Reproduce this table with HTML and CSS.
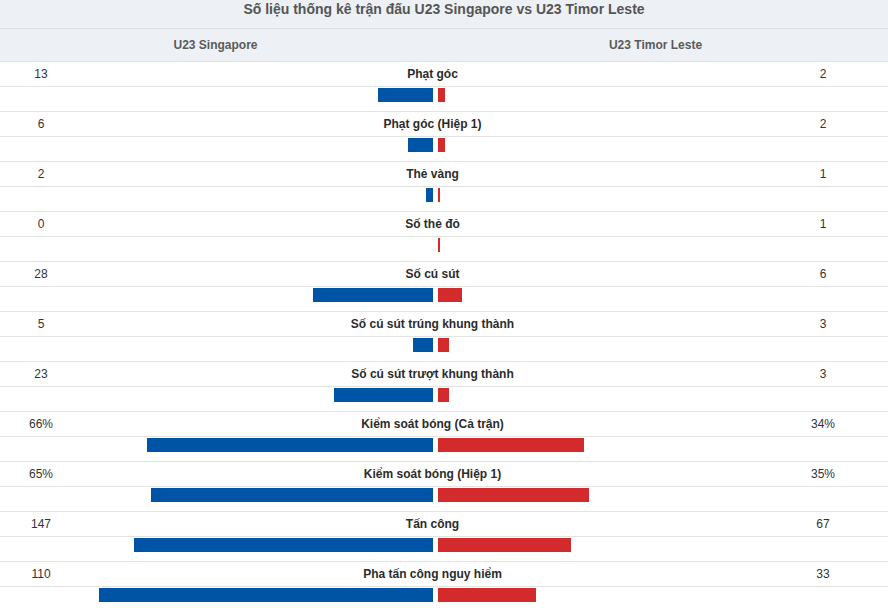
FILE: index.html
```html
<!DOCTYPE html>
<html lang="vi">
<head>
<meta charset="utf-8">
<title>Số liệu thống kê</title>
<link rel="stylesheet" href="styles.css">
</head>
<body>
<div class="stats">
  <div class="title">Số liệu thống kê trận đấu U23 Singapore vs U23 Timor Leste</div>
  <div class="head">
    <div class="team">U23 Singapore</div>
    <div class="team">U23 Timor Leste</div>
  </div>

  <div class="row"><span class="num">13</span><span class="label">Phạt góc</span><span class="num">2</span></div>
  <div class="bars"><div class="left"><i class="bar blue" style="width:55px"></i></div><div class="right"><i class="bar red" style="width:7px"></i></div></div>

  <div class="row"><span class="num">6</span><span class="label">Phạt góc (Hiệp 1)</span><span class="num">2</span></div>
  <div class="bars"><div class="left"><i class="bar blue" style="width:25px"></i></div><div class="right"><i class="bar red" style="width:7px"></i></div></div>

  <div class="row"><span class="num">2</span><span class="label">Thẻ vàng</span><span class="num">1</span></div>
  <div class="bars"><div class="left"><i class="bar blue" style="width:7px"></i></div><div class="right"><i class="bar red" style="width:2px"></i></div></div>

  <div class="row"><span class="num">0</span><span class="label">Số thẻ đỏ</span><span class="num">1</span></div>
  <div class="bars"><div class="left"><i class="bar blue" style="width:0px"></i></div><div class="right"><i class="bar red" style="width:2px"></i></div></div>

  <div class="row"><span class="num">28</span><span class="label">Số cú sút</span><span class="num">6</span></div>
  <div class="bars"><div class="left"><i class="bar blue" style="width:120px"></i></div><div class="right"><i class="bar red" style="width:24px"></i></div></div>

  <div class="row"><span class="num">5</span><span class="label">Số cú sút trúng khung thành</span><span class="num">3</span></div>
  <div class="bars"><div class="left"><i class="bar blue" style="width:20px"></i></div><div class="right"><i class="bar red" style="width:11px"></i></div></div>

  <div class="row"><span class="num">23</span><span class="label">Số cú sút trượt khung thành</span><span class="num">3</span></div>
  <div class="bars"><div class="left"><i class="bar blue" style="width:99px"></i></div><div class="right"><i class="bar red" style="width:11px"></i></div></div>

  <div class="row"><span class="num">66%</span><span class="label">Kiểm soát bóng (Cả trận)</span><span class="num">34%</span></div>
  <div class="bars"><div class="left"><i class="bar blue" style="width:286px"></i></div><div class="right"><i class="bar red" style="width:146px"></i></div></div>

  <div class="row"><span class="num">65%</span><span class="label">Kiểm soát bóng (Hiệp 1)</span><span class="num">35%</span></div>
  <div class="bars"><div class="left"><i class="bar blue" style="width:282px"></i></div><div class="right"><i class="bar red" style="width:151px"></i></div></div>

  <div class="row"><span class="num">147</span><span class="label">Tấn công</span><span class="num">67</span></div>
  <div class="bars"><div class="left"><i class="bar blue" style="width:299px"></i></div><div class="right"><i class="bar red" style="width:133px"></i></div></div>

  <div class="row"><span class="num">110</span><span class="label">Pha tấn công nguy hiểm</span><span class="num">33</span></div>
  <div class="bars"><div class="left"><i class="bar blue" style="width:334px"></i></div><div class="right"><i class="bar red" style="width:98px"></i></div></div>
</div>
</body>
</html>
```
FILE: styles.css
```css
* { box-sizing: border-box; }
html, body { margin: 0; padding: 0; background: #fff; }
body {
  font-family: "Liberation Sans", Arial, sans-serif;
  font-size: 12px;
  color: #333;
  width: 888px;
  height: 610px;
  overflow: hidden;
}
.stats { width: 888px; }
.title {
  height: 29px;
  line-height: 19px;
  background: #edf1f5;
  border-bottom: 1px solid #dde3ea;
  text-align: center;
  font-size: 14px;
  font-weight: bold;
  color: #555;
}
.head {
  display: grid;
  grid-template-columns: 431px 449px 1fr;
  height: 33px;
  background: #edf1f5;
  border-bottom: 1px solid #dde2e8;
}
.team {
  line-height: 32px;
  text-align: center;
  color: #5a5a5a;
  font-size: 12px;
  font-weight: bold;
}
.row {
  display: grid;
  grid-template-columns: 82px 701px 80px 1fr;
  height: 25px;
  line-height: 24px;
  border-bottom: 1px solid #e3e3e3;
}
.num { text-align: center; color: #333; }
.label { text-align: center; color: #2b2b2b; font-weight: bold; }
.bars {
  display: grid;
  grid-template-columns: 433px 1fr;
  column-gap: 5px;
  height: 25px;
  padding-top: 1px;
  border-bottom: 1px solid #e3e3e3;
}
.left { display: flex; justify-content: flex-end; align-items: flex-start; }
.right { display: flex; justify-content: flex-start; align-items: flex-start; }
.bar { display: block; height: 14px; }
.blue { background: #0054a5; }
.red { background: #d32b2b; }
```
